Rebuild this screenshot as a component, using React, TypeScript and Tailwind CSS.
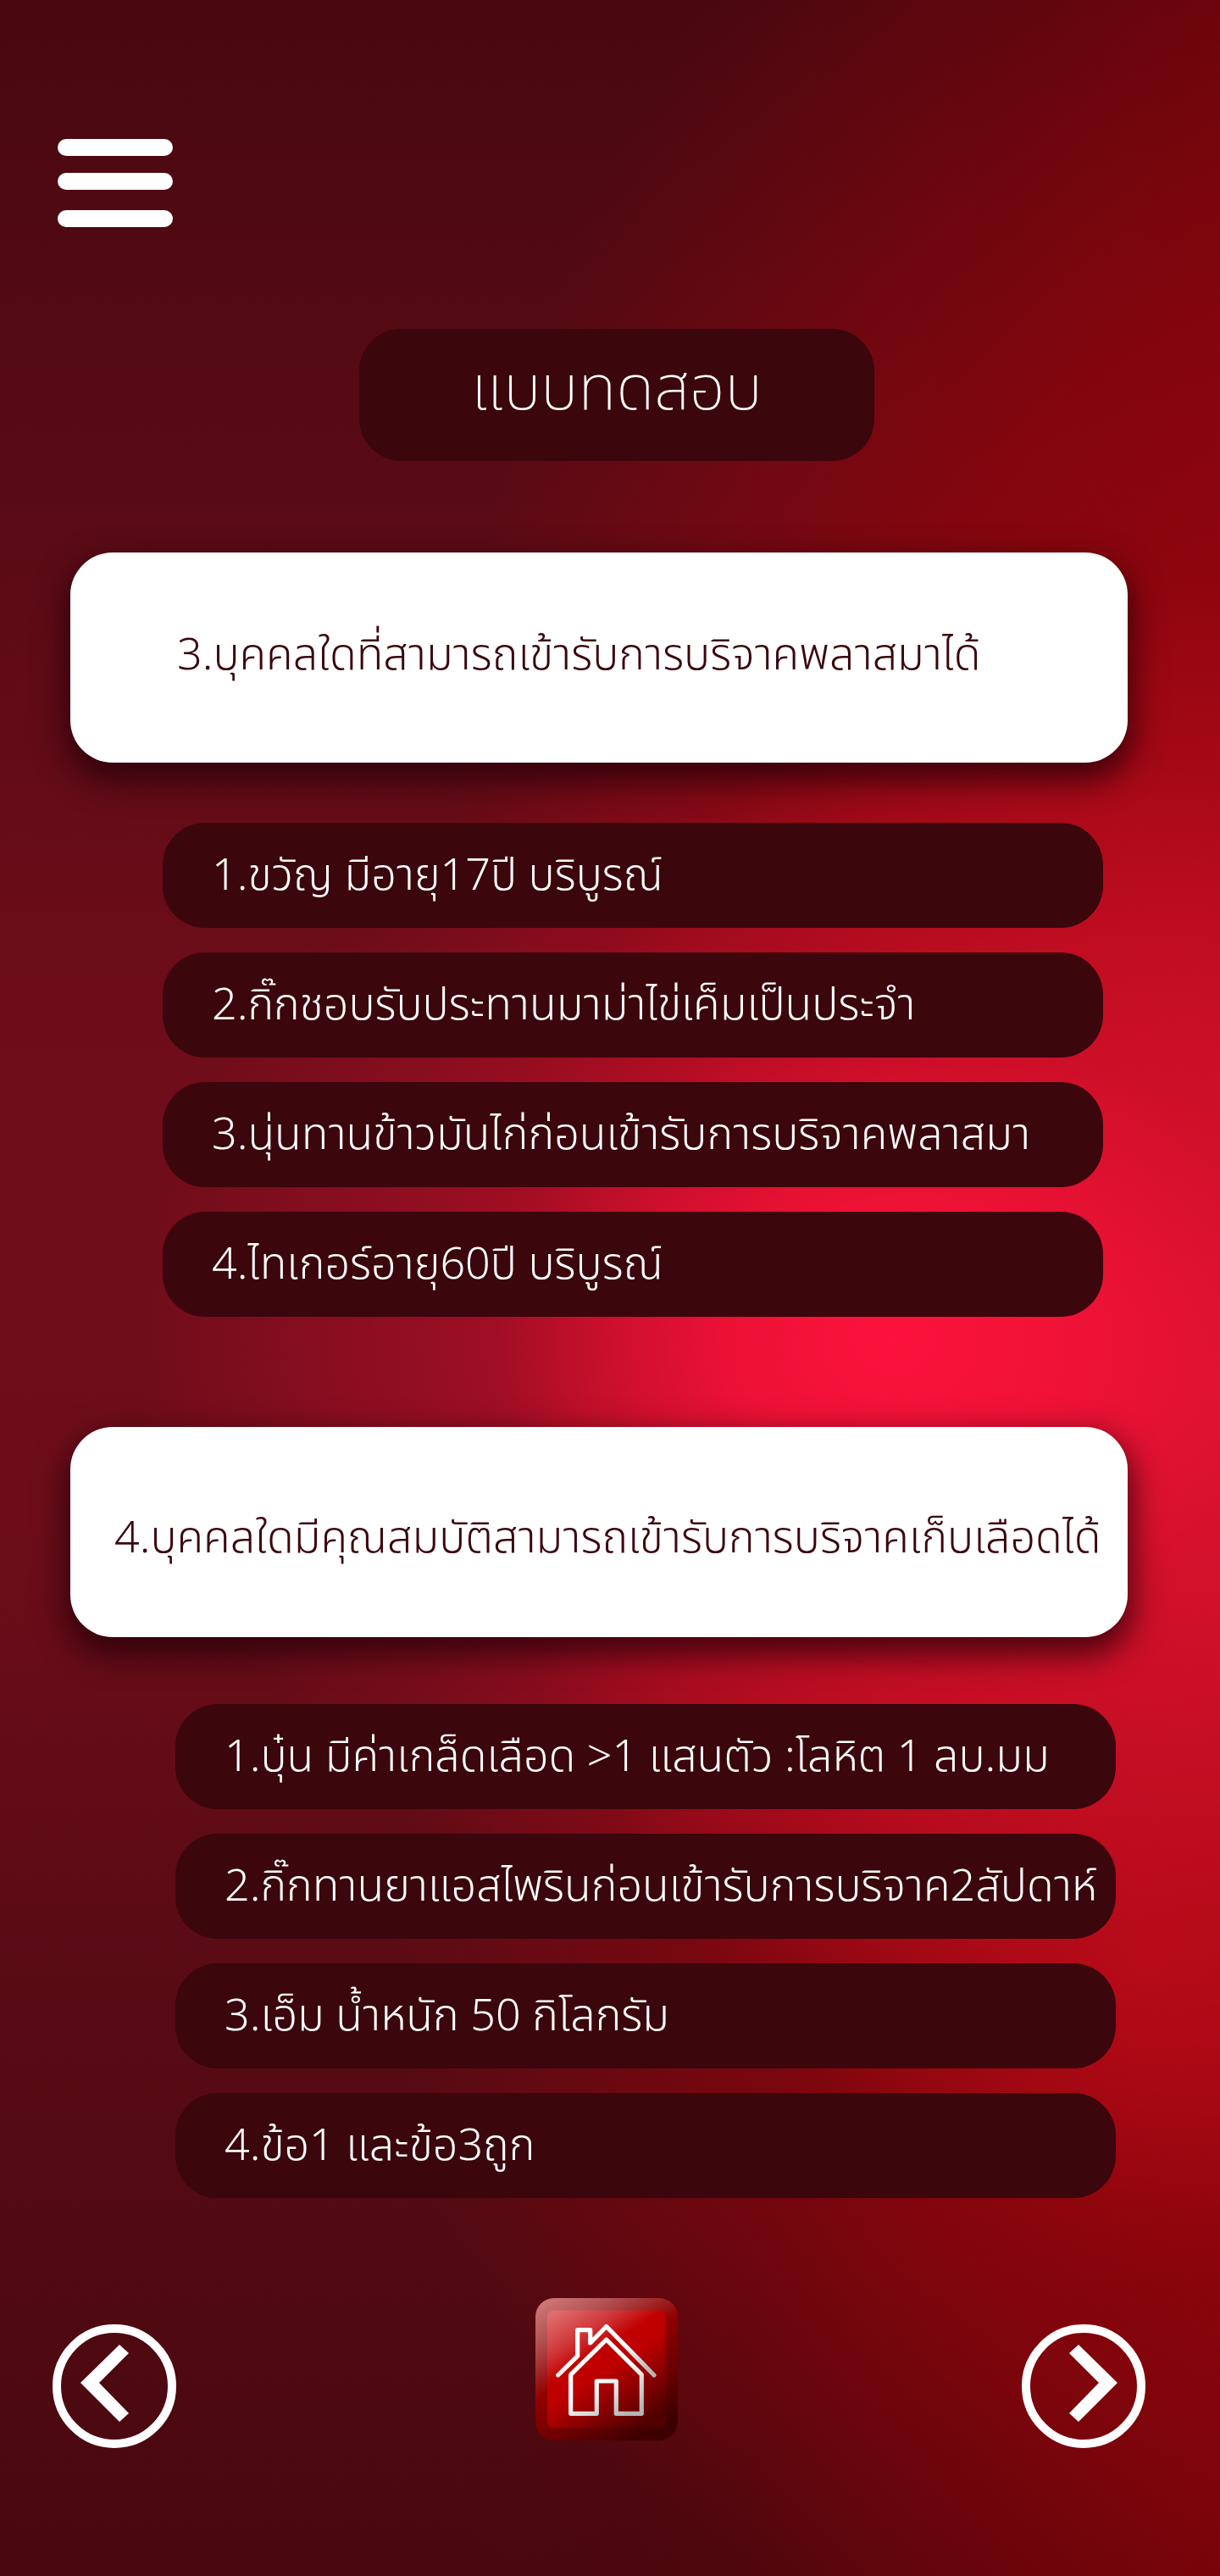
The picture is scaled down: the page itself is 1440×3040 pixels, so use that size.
type Quiz = {
  question: string;
  options: string[];
  questionClass: string;
  listClass: string;
};

const quizzes: Quiz[] = [
  {
    question: "3.บุคคลใดที่สามารถเข้ารับการบริจาคพลาสมาได้",
    options: [
      "1.ขวัญ มีอายุ17ปี บริบูรณ์",
      "2.กิ๊กชอบรับประทานมาม่าไข่เค็มเป็นประจำ",
      "3.นุ่นทานข้าวมันไก่ก่อนเข้ารับการบริจาคพลาสมา",
      "4.ไทเกอร์อายุ60ปี บริบูรณ์",
    ],
    questionClass: "pl-[126px] pb-1",
    listClass: "mt-[71px] pl-[109px] pr-[29px]",
  },
  {
    question: "4.บุคคลใดมีคุณสมบัติสามารถเข้ารับการบริจาคเก็บเลือดได้",
    options: [
      "1.บุ๋น มีค่าเกล็ดเลือด >1 แสนตัว :โลหิต 1 ลบ.มม",
      "2.กิ๊กทานยาแอสไพรินก่อนเข้ารับการบริจาค2สัปดาห์",
      "3.เอ็ม น้ำหนัก 50 กิโลกรัม",
      "4.ข้อ1 และข้อ3ถูก",
    ],
    questionClass: "pl-[52px] pt-4",
    listClass: "mt-[79px] pl-[124px] pr-[14px]",
  },
];

function QuizBlock({ quiz }: { quiz: Quiz }) {
  return (
    <section>
      <div
        className={`flex h-[248px] items-center rounded-[50px] bg-white shadow-[0_16px_36px_6px_rgba(35,2,8,0.75)] ${quiz.questionClass}`}
      >
        <h2 className="text-[52px] leading-[80px] font-light whitespace-nowrap text-[#3b060c]">
          {quiz.question}
        </h2>
      </div>
      <ul className={`flex flex-col gap-[29px] ${quiz.listClass}`}>
        {quiz.options.map((option) => (
          <li key={option}>
            <button
              type="button"
              className="flex h-[124px] w-full items-center rounded-[50px] bg-[#3b060c] pt-0.5 pl-[58px] text-left text-[52px] leading-[80px] font-light whitespace-nowrap text-white"
            >
              {option}
            </button>
          </li>
        ))}
      </ul>
    </section>
  );
}

function ArrowIcon({ points }: { points: string }) {
  return (
    <svg viewBox="0 0 146 146" className="size-[146px]" aria-hidden="true">
      <circle cx="73" cy="73" r="68" fill="none" stroke="#fff" strokeWidth="10" />
      <polygon points={points} fill="#fff" />
    </svg>
  );
}

function HomeIcon() {
  return (
    <svg viewBox="0 0 168 168" className="size-[168px]" aria-hidden="true">
      <defs>
        <linearGradient id="rim" x1="0.1" y1="0" x2="0.7" y2="1">
          <stop offset="0" stopColor="#cf7777" />
          <stop offset="0.2" stopColor="#b25052" />
          <stop offset="0.48" stopColor="#920000" />
          <stop offset="0.75" stopColor="#6c0000" />
          <stop offset="1" stopColor="#3d0000" />
        </linearGradient>
        <linearGradient id="face" x1="0.1" y1="0" x2="0.75" y2="1">
          <stop offset="0" stopColor="#e06c6c" />
          <stop offset="0.22" stopColor="#d03a3c" />
          <stop offset="0.4" stopColor="#c20000" />
          <stop offset="0.55" stopColor="#bc0000" />
          <stop offset="1" stopColor="#500000" />
        </linearGradient>
        <linearGradient id="line" x1="0.2" y1="0" x2="0.8" y2="1">
          <stop offset="0.5" stopColor="#fff" />
          <stop offset="1" stopColor="#b5b5b5" />
        </linearGradient>
      </defs>
      <rect width="168" height="168" rx="22" fill="url(#rim)" />
      <rect x="14" y="14.500" width="139" height="139" rx="7" fill="url(#face)" />
      <g fill="none" stroke="url(#line)" strokeWidth="5.200" strokeLinecap="round" strokeLinejoin="round">
        <path d="M26.700 91 49.700 68.300V37.700H64.700V53L83.700 33.500 140 91" />
        <path d="M83.700 49 125.300 90.300V136.300H95.300V98H72.300V136.300H41.700V90.300Z" />
      </g>
    </svg>
  );
}

export default function App() {
  return (
    <main
      className="flex min-h-screen flex-col bg-[#50090f] pb-[151px] font-['Noto_Sans_Thai','Noto_Sans',sans-serif]"
      style={{
        backgroundImage: [
          "radial-gradient(ellipse 62% 24% at 73% 52%, rgba(252,18,60,1) 0%, rgba(248,18,58,.85) 22%, rgba(225,16,50,.42) 52%, rgba(200,15,45,0) 100%)",
          "radial-gradient(ellipse 62% 32% at 102% 54%, rgba(218,22,48,.95) 0%, rgba(208,18,40,.75) 38%, rgba(180,8,20,0) 100%)",
          "radial-gradient(ellipse 62% 50% at 98% 38%, rgba(165,4,14,.8) 0%, rgba(160,4,13,.6) 45%, rgba(140,4,12,0) 100%)",
          "radial-gradient(ellipse 62% 28% at 94% 76%, rgba(185,8,18,.85) 0%, rgba(160,4,12,.55) 45%, rgba(140,4,12,0) 100%)",
          "linear-gradient(97deg, rgba(90,3,8,0) 50%, rgba(90,3,8,.3) 68%, rgba(118,4,9,.9) 100%)",
          "linear-gradient(180deg, #48080f 0%, #5a0b15 20%, #700d1a 42%, #6e0d1a 58%, #580b14 78%, #48080f 100%)",
        ].join(","),
      }}
    >
      <header className="flex flex-col pt-[164px]">
        <button type="button" aria-label="เมนู" className="ml-[68px] flex w-[136px] flex-col">
          <span className="h-5 w-full rounded-[10px] bg-white" />
          <span className="mt-5 h-5 w-full rounded-[10px] bg-white" />
          <span className="mt-6 h-5 w-full rounded-[10px] bg-white" />
        </button>
        <h1 className="mt-[120px] ml-4 flex h-[156px] w-[608px] items-center justify-center self-center rounded-[50px] bg-[#3b060c] pb-3 text-[74px] leading-[110px] font-extralight text-white">
          แบบทดสอบ
        </h1>
      </header>

      <div className="mt-[108px] flex flex-col gap-[130px] pr-[109px] pl-[83px]">
        {quizzes.map((quiz) => (
          <QuizBlock key={quiz.question} quiz={quiz} />
        ))}
      </div>

      <nav className="mt-[118px] grid grid-cols-[1fr_auto_1fr] items-start pr-[70px] pl-[62px]">
        <a href="#previous" aria-label="ย้อนกลับ" className="mt-[31px] justify-self-start">
          <ArrowIcon points="33,69 79,24 90,34 55,69 90,105 79,115" />
        </a>
        <a href="#home" aria-label="หน้าแรก">
          <HomeIcon />
        </a>
        <a href="#next" aria-label="ถัดไป" className="mt-[31px] mr-[18px] justify-self-end">
          <ArrowIcon points="113,69 67,24 56,34 91,69 56,105 67,115" />
        </a>
      </nav>
    </main>
  );
}
